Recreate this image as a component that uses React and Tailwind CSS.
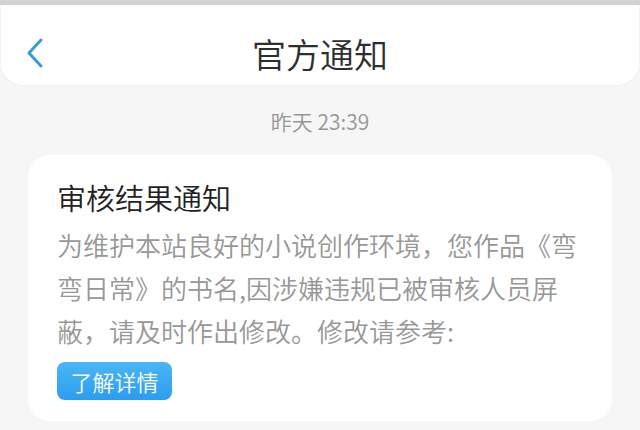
export default function App() {
  return (
    <div className="w-[640px] h-[430px] overflow-hidden bg-[#f7f6f7] font-['Noto_Sans_CJK_SC','Noto_Sans',sans-serif]">
      <div className="h-[5px] bg-[#d3d3d3]" />
      <div className="mx-[1px] h-[80px] rounded-b-[22px] bg-white shadow-[0_1px_2px_rgba(0,0,0,0.03)] grid grid-cols-[1fr_auto_1fr] items-start pt-[32px]">
        <div className="pl-[25px]">
          <svg width="18" height="32" viewBox="0 0 18 32" fill="none">
            <polyline points="15,3 3,16 15,29" stroke="#3a9cd6" strokeWidth="3" strokeLinecap="round" strokeLinejoin="round" />
          </svg>
        </div>
        <div className="text-[34px] leading-[34px] text-[#2e2e2e] font-[350]">官方通知</div>
        <div />
      </div>
      <div className="mt-[26px] text-center text-[21px] leading-[20px] text-[#959595] font-[350]">昨天 23:39</div>
      <div className="mx-[28px] mt-[24px] rounded-[22px] bg-white pl-[29px] pr-[20px] pt-[28px] pb-[21px]">
        <div className="text-[29px] leading-[29px] text-[#222222] font-[350]">审核结果通知</div>
        <div className="mt-[11px] text-[26px] leading-[43px] text-[#979797] whitespace-nowrap font-[350]">
          <div>为维护本站良好的小说创作环境，您作品《弯</div>
          <div>弯日常》的书名,因涉嫌违规已被审核人员屏</div>
          <div>蔽，请及时作出修改。修改请参考:</div>
        </div>
        <div className="mt-[10px] flex">
          <div className="h-[38px] w-[115px] rounded-[8px] bg-gradient-to-b from-[#4ab6f6] to-[#2b9cf0] flex items-center justify-center text-[22px] text-white font-[350]">
            了解详情
          </div>
        </div>
      </div>
    </div>
  );
}
